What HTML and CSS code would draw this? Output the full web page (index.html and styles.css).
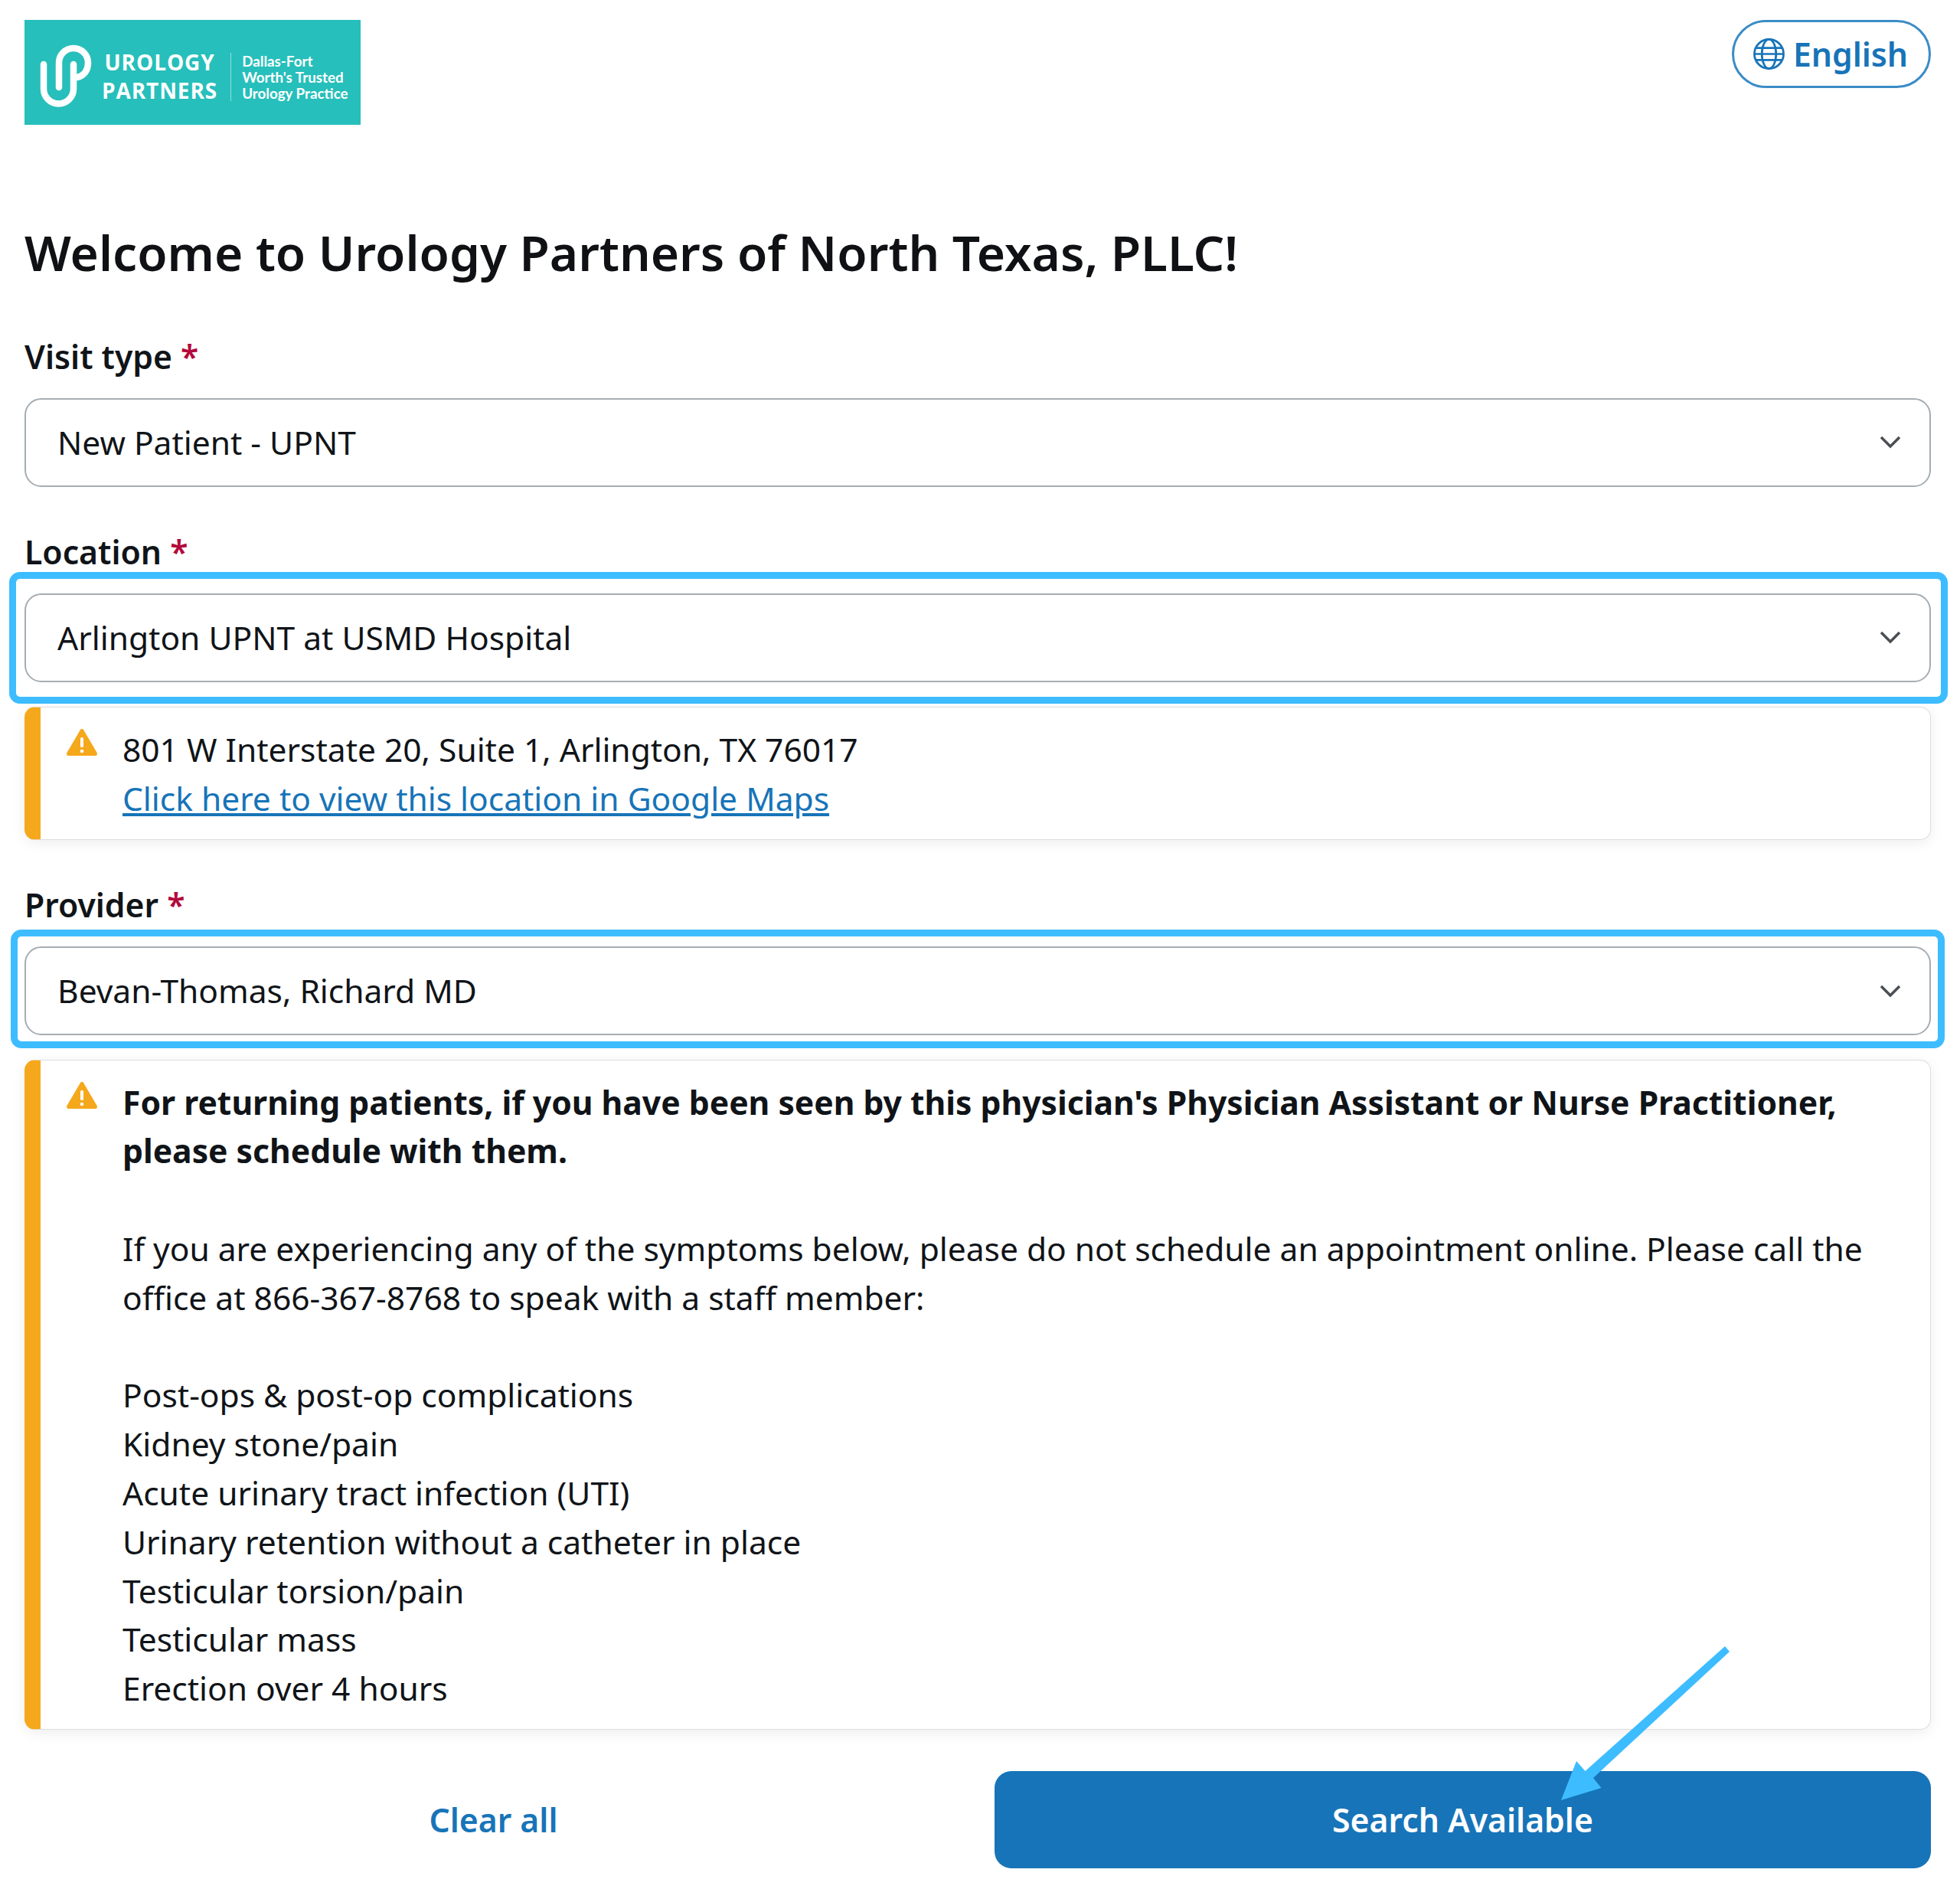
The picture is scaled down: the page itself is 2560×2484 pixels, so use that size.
FILE: index.html
```html
<!DOCTYPE html>
<html lang="en">
<head>
<meta charset="utf-8">
<title>Urology Partners of North Texas</title>
<link rel="stylesheet" href="styles.css">
</head>
<body>
<div class="page">
  <header class="top">
    <div class="logo">
      <svg class="logo-mark" viewBox="0 0 70 90" fill="none" stroke="#fff" stroke-width="8.5" stroke-linecap="round" stroke-linejoin="round">
        <path d="M6 26V58a19.5 19.5 0 0 0 39 0V26"/>
        <path d="M26 56V24a19 19 0 0 1 38 0c0 11-6 17-14 19"/>
      </svg>
      <div class="logo-name"><span>UROLOGY</span><span>PARTNERS</span></div>
      <div class="logo-tag"><span>Dallas-Fort</span><span>Worth's Trusted</span><span>Urology Practice</span></div>
    </div>
    <button class="lang">
      <svg class="globe" viewBox="0 0 44 44" fill="none" stroke="#1774b8" stroke-width="2.8">
        <circle cx="22" cy="22" r="19.5"/>
        <ellipse cx="22" cy="22" rx="9.5" ry="19.5"/>
        <path d="M4.5 14H39.5M2.5 22H41.5M4.5 30H39.5"/>
      </svg>
      <span>English</span>
    </button>
  </header>

  <h1>Welcome to Urology Partners of North Texas, PLLC!</h1>

  <label class="label first">Visit type <span class="req">*</span></label>
  <div class="select"><span>New Patient - UPNT</span><svg class="chev" viewBox="0 0 28 18"><path d="M2 3l12 12L26 3"/></svg></div>

  <label class="label">Location <span class="req">*</span></label>
  <div class="select"><span>Arlington UPNT at USMD Hospital</span><svg class="chev" viewBox="0 0 28 18"><path d="M2 3l12 12L26 3"/></svg><div class="mark mark-loc"></div></div>

  <div class="alert">
    <svg class="warn" viewBox="0 0 40 35"><path d="M20 0c1 0 1.800.5 2.300 1.400L39.600 31c.9 1.700 0 4-2.200 4H2.600C.4 35-.5 32.700.4 31L17.700 1.400C18.200.5 19 0 20 0z" fill="#f5a81c"/><rect x="18" y="11" width="4" height="13" rx="1.500" fill="#fff"/><circle cx="20" cy="29" r="2.300" fill="#fff"/></svg>
    <div class="alert-body">
      <div>801 W Interstate 20, Suite 1, Arlington, TX 76017</div>
      <a class="map-link" href="#">Click here to view this location in Google Maps</a>
    </div>
  </div>

  <label class="label">Provider <span class="req">*</span></label>
  <div class="select"><span>Bevan-Thomas, Richard MD</span><svg class="chev chev-low" viewBox="0 0 28 18"><path d="M2 3l12 12L26 3"/></svg><div class="mark mark-prov"></div></div>

  <div class="alert">
    <svg class="warn" viewBox="0 0 40 35"><path d="M20 0c1 0 1.800.5 2.300 1.400L39.600 31c.9 1.700 0 4-2.200 4H2.600C.4 35-.5 32.700.4 31L17.700 1.400C18.200.5 19 0 20 0z" fill="#f5a81c"/><rect x="18" y="11" width="4" height="13" rx="1.500" fill="#fff"/><circle cx="20" cy="29" r="2.300" fill="#fff"/></svg>
    <div class="alert-body">
      <p><strong>For returning patients, if you have been seen by this physician's Physician Assistant or Nurse Practitioner, please schedule with them.</strong></p>
      <p>If you are experiencing any of the symptoms below, please do not schedule an appointment online. Please call the office at 866-367-8768 to speak with a staff member:</p>
      <ul class="symptoms">
        <li>Post-ops &amp; post-op complications</li>
        <li>Kidney stone/pain</li>
        <li>Acute urinary tract infection (UTI)</li>
        <li>Urinary retention without a catheter in place</li>
        <li>Testicular torsion/pain</li>
        <li>Testicular mass</li>
        <li>Erection over 4 hours</li>
      </ul>
    </div>
  </div>

  <div class="actions">
    <button class="clear">Clear all</button>
    <button class="search">Search Available</button>
  </div>
</div>
<svg class="arrow" viewBox="0 0 240 215" fill="#3dbdff">
  <path d="M223 5L229 12L51 177L61.500 190L9 206L29 155L40.500 168Z"/>
</svg>
</body>
</html>
```
FILE: styles.css
```css
* { box-sizing: border-box; }
html, body { margin: 0; padding: 0; background: #fff; }
body { position: relative; height: 2484px; overflow: hidden; color: #101418; font-family: "Noto Sans", sans-serif; font-size: 42.500px; line-height: 63.800px; }
.page { padding: 26px 38px 0 32px; }

.top { display: flex; justify-content: space-between; align-items: flex-start; }
.logo { width: 439px; height: 137px; padding-top: 11px; background: #27bfbb; color: #fff; display: flex; align-items: center; position: relative; }
.logo-mark { width: 70px; height: 90px; margin: 5px 0 0 19px; flex: none; }
.logo-name { display: flex; flex-direction: column; align-items: center; margin-left: 12px; font-family: "Open Sans", sans-serif; font-weight: 700; font-size: 28px; line-height: 37px; letter-spacing: .9px; }
.logo-tag { display: flex; flex-direction: column; margin-left: 17px; padding-left: 14px; border-left: 1px solid rgba(255,255,255,.5); font-family: "Lato", sans-serif; font-weight: 700; font-size: 18.800px; line-height: 21px; }
.lang { width: 260px; height: 89px; border: 3px solid #3b8cc6; border-radius: 45px; background: #fff; color: #1774b8; display: flex; align-items: center; justify-content: center; gap: 10px; font-family: "Noto Sans", sans-serif; font-weight: 600; font-size: 42.700px; padding: 0 3px 0 0; }
.globe { width: 43px; height: 43px; flex: none; }

h1 { margin: 123px 0 0; font-size: 63.900px; line-height: 88px; font-weight: 600; color: #0f1114; }

.label { display: block; margin-top: 54px; height: 60px; line-height: 62px; font-size: 42.700px; font-weight: 600; }
.label.first { margin-top: 61px; }
.req { color: #b3093c; }

.select { position: relative; margin-top: 25px; height: 116px; padding: 0 37px 0 41px; border: 2px solid #a5adb3; border-radius: 22px; display: flex; align-items: center; justify-content: space-between; background: #fff; }
.chev { width: 28px; height: 18px; margin-top: -3px; fill: none; stroke: #4a4f54; stroke-width: 3.500; }
.chev-low { margin-top: 1px; }
.mark { position: absolute; border: 9px solid #3dbdff; border-radius: 14px; pointer-events: none; }
.mark-loc { left: -22px; right: -24px; top: -30px; bottom: -30px; }
.mark-prov { left: -20px; right: -20px; top: -24px; bottom: -19px; }

.alert { position: relative; margin-top: 32px; border: 1px solid #dcdee0; border-left: 21px solid #f5a81c; border-radius: 14px; padding: 23px 40px 21px 34px; display: flex; gap: 33px; background: #fff; box-shadow: 0 4px 18px rgba(0,0,0,.07); }
.warn { width: 40px; height: 35px; flex: none; margin-top: 5px; }
.alert-body { flex: 1; }
.alert-body p { margin: 0 0 63.800px; }
.alert-body strong { font-size: 42.650px; }
.map-link { color: #1774b8; text-decoration: underline; }
.symptoms { list-style: none; margin: 0; padding: 0; }

.actions { display: flex; margin-top: 54px; }
.clear { width: 1225px; margin-right: 42px; height: 127px; flex: none; border: 0; background: none; color: #1774b8; font-family: "Noto Sans", sans-serif; font-size: 42.700px; font-weight: 600; padding: 0; }
.search { flex: 1; height: 127px; border: 0; border-radius: 22px; background: #1774b8; color: #fff; font-family: "Noto Sans", sans-serif; font-size: 42.700px; font-weight: 600; padding: 0; }

.arrow { position: absolute; left: 2030px; top: 2145px; width: 240px; height: 215px; }
```
